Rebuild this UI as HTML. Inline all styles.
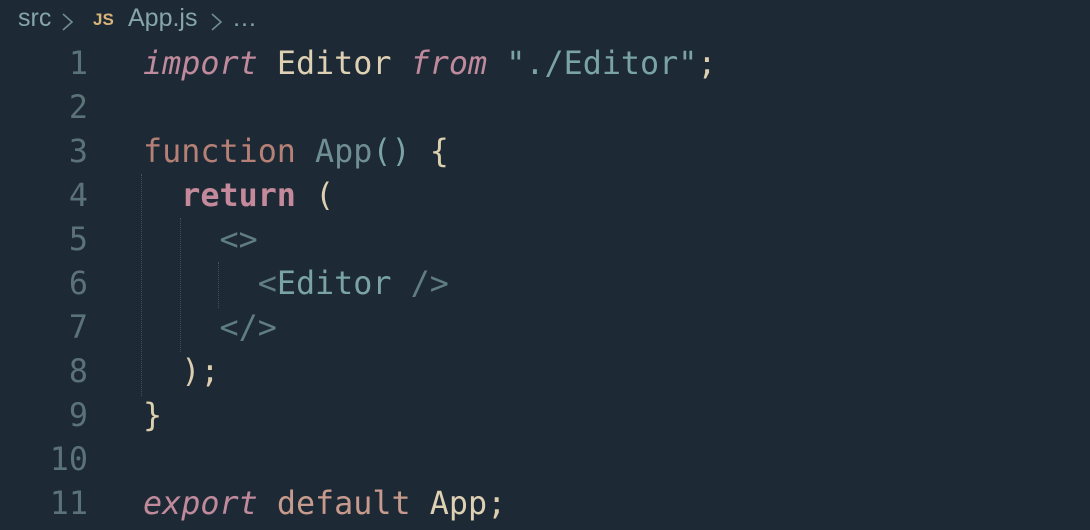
<!DOCTYPE html>
<html><head><meta charset="utf-8"><style>
html,body{margin:0;padding:0;background:#1d2934;width:1090px;height:530px;overflow:hidden}
.b{position:absolute;top:3px;font:25px "Liberation Sans",sans-serif;color:#86a5ab;white-space:pre;line-height:30px}
.js{position:absolute;left:93px;top:10px;font:bold 17px "Liberation Sans",sans-serif;color:#d9b47a;letter-spacing:0px}
.ln{position:absolute;left:0;width:88px;text-align:right;font:31.75px "DejaVu Sans Mono",monospace;color:#5b7378;line-height:44px}
.code{position:absolute;left:143px;font:31.75px "DejaVu Sans Mono",monospace;line-height:44px;white-space:pre;color:#7aa3a6}
.kw{color:#bf8a9c;font-style:italic}
.id{color:#ddd0b3}
.fn{color:#b58076}
.ap{color:#6f8e94}
.ret{color:#c48a9b;font-weight:bold}
.p{color:#dccfaf}
.t{color:#5f7d82}
.g{position:absolute;width:0;border-left:1px dotted #3f525b}
</style></head><body>
<div class="b" style="left:18px">src</div>
<svg style="position:absolute;left:61px;top:13px" width="14" height="18"><path d="M2 1 L11 9 L2 17" fill="none" stroke="#6f8d93" stroke-width="1.6"/></svg>
<div class="js">JS</div>
<div class="b" style="left:128px">App.js</div>
<svg style="position:absolute;left:210px;top:13px" width="14" height="18"><path d="M2 1 L11 9 L2 17" fill="none" stroke="#6f8d93" stroke-width="1.6"/></svg>
<div class="b" style="left:232px">…</div>
<div class="ln" style="top:42px">1<br>2<br>3<br>4<br>5<br>6<br>7<br>8<br>9<br>10<br>11</div>
<div class="code" style="top:42px"><span class="kw">import</span> <span class="id">Editor</span> <span class="kw">from</span> "./Editor"<span class="p">;</span>

<span class="fn">function</span> <span class="ap">App</span>() <span class="p">{</span>
  <span class="ret">return</span> <span class="p">(</span>
    <span class="t">&lt;&gt;</span>
      <span class="t">&lt;</span>Editor <span class="t">/&gt;</span>
    <span class="t">&lt;/&gt;</span>
  <span class="p">);</span>
<span class="p">}</span>

<span class="kw">export</span> <span class="fn" style="color:#c79a8e">default</span> <span class="id">App</span><span class="p">;</span></div>
<div class="g" style="left:141px;top:174px;height:222px"></div>
<div class="g" style="left:180px;top:218px;height:134px"></div>
<div class="g" style="left:218px;top:262px;height:46px"></div>
</body></html>
